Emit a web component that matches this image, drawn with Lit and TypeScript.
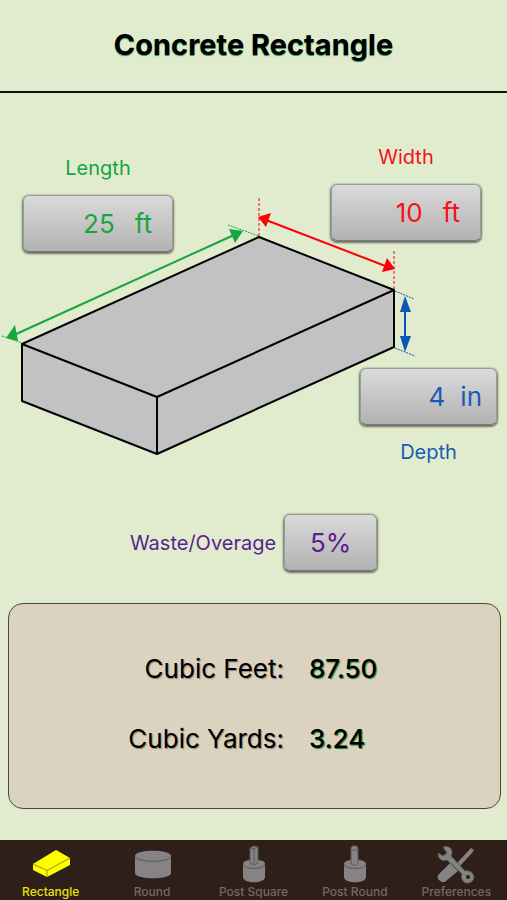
import { LitElement, html, css, svg, nothing } from "lit";
import { customElement, property, state } from "lit/decorators.js";
import { classMap } from "lit/directives/class-map.js";

const tabIcons = {
  rectangle: svg`
    <path class="fill" d="M2 20 25 6 39 14V21L16 33 2 26Z"/>
    <path class="seam" d="M2 20 16 26.500 39 14M16 26.500V33"/>`,
  round: svg`
    <path class="fill" d="M3 12C3 5 39 5 39 12V29C39 36 3 36 3 29Z"/>
    <path class="seam" d="M3 12C3 19 39 19 39 12"/>`,
  postSquare: svg`
    <path class="fill" d="M9 20C9 14 31 14 31 20V33C31 40 9 40 9 33Z"/>
    <path class="seam" d="M9 20C9 26 31 26 31 20"/>
    <path class="fill edge" d="M16 4 20 2 24 3V19L20 21 16 19Z"/>
    <path class="seam" d="M16 4 20 5 24 3M20 5V21"/>`,
  postRound: svg`
    <path class="fill" d="M9 20C9 14 31 14 31 20V33C31 40 9 40 9 33Z"/>
    <path class="seam" d="M9 20C9 26 31 26 31 20"/>
    <path class="fill edge" d="M16 4C16 1 23 1 23 4V19C23 22 16 22 16 19Z"/>
    <path class="seam" d="M16 4C16 7 23 7 23 4"/>`,
  preferences: svg`
    <path class="fill" d="M35 4 38 6 36 9 24 22 21 19Z"/>
    <path class="fill" d="M14 19 22 27 10 37Q7 40 3 36 0 33 3 30Z"/>
    <path class="fill edge" d="M7 3C14 1 18 6 15 12L29 27C34 26 38 29 38 34 37 39 30 41 27 37 25 34 25 32 26 30L11 16C6 18 2 15 2 9L7 12 11 9Z"/>
    <circle class="hole" cx="32" cy="33" r="2"/>`,
};

type TabId = keyof typeof tabIcons;

const tabs: { id: TabId; label: string }[] = [
  { id: "rectangle", label: "Rectangle" },
  { id: "round", label: "Round" },
  { id: "postSquare", label: "Post Square" },
  { id: "postRound", label: "Post Round" },
  { id: "preferences", label: "Preferences" },
];

@customElement("measure-field")
export class MeasureField extends LitElement {
  @property() label = "";
  @property() value = "";
  @property() unit = "";

  static styles = css`
    :host {
      display: flex;
      flex-direction: column;
      align-items: center;
      gap: 15px;
    }
    :host([layout="below"]) {
      flex-direction: column-reverse;
    }
    :host([layout="inline"]) {
      flex-direction: row;
      gap: 8px;
    }
    label {
      font-size: 20px;
      line-height: 24px;
    }
    button {
      box-sizing: border-box;
      display: flex;
      align-items: center;
      justify-content: flex-end;
      gap: 20px;
      width: var(--field-width, 150px);
      height: 57px;
      padding: 0 20px;
      border: 1px solid #9a9a98;
      border-bottom-color: #777;
      border-radius: 6px;
      background: linear-gradient(#dadadb, #b2b2b3);
      box-shadow: 0 1px 2px 1px #6c7264;
      color: inherit;
      font: 26px/32px Inter, sans-serif;
      cursor: pointer;
    }
    :host([layout="below"]) button {
      gap: 15px;
      padding: 0 14px;
    }
    :host([layout="inline"]) button {
      justify-content: center;
      padding: 0;
    }
  `;

  render() {
    return html`
      <label for="value">${this.label}</label>
      <button id="value" type="button">
        <span>${this.value}</span>${this.unit ? html`<span>${this.unit}</span>` : nothing}
      </button>
    `;
  }
}

@customElement("app-root")
export class AppRoot extends LitElement {
  @state() private active: TabId = "rectangle";

  static styles = css`
    :host {
      display: flex;
      flex-direction: column;
      min-height: 100vh;
      background: #e1ecce;
      color: #000;
      font-family: Inter, sans-serif;
    }
    header {
      padding: 27px 16px 28px;
      border-bottom: 2px solid #0c140c;
      text-align: center;
    }
    h1 {
      margin: 0;
      font-size: 29px;
      line-height: 36px;
      font-weight: 700;
      text-shadow: 0 1px 1px #2c8a50;
    }
    main {
      flex: 1;
      display: flex;
      flex-direction: column;
    }
    .stage {
      display: grid;
    }
    .slab,
    .fields {
      grid-area: 1 / 1;
    }
    .slab {
      display: block;
      width: 100%;
    }
    .face {
      fill: #c2c2c2;
      stroke: #000;
      stroke-width: 2;
      stroke-linejoin: round;
    }
    .line {
      stroke-width: 2;
    }
    .guide {
      stroke-width: 1;
      stroke-dasharray: 2 1;
    }
    .guide.tall {
      stroke-dasharray: 3 2;
    }
    .green {
      stroke: #16a53f;
      fill: #16a53f;
    }
    .red {
      stroke: #fb0007;
      fill: #fb0007;
    }
    .blue {
      stroke: #0a57b5;
      fill: #0a57b5;
    }
    .head {
      stroke: none;
    }
    .fields {
      display: flex;
      justify-content: space-between;
      align-items: flex-start;
    }
    .right {
      display: flex;
      flex-direction: column;
      align-items: flex-end;
      gap: 127px;
      padding-top: 52px;
    }
    .length {
      color: #16a53f;
      padding: 63px 0 0 23px;
    }
    .width {
      color: #f5101a;
      padding-right: 26px;
    }
    .depth {
      --field-width: 137px;
      color: #1a5cb4;
      padding-right: 10px;
    }
    .waste {
      --field-width: 93px;
      color: #5b1f91;
      justify-content: center;
      padding-top: 34px;
    }
    .results {
      display: grid;
      grid-template-columns: 275px 1fr;
      column-gap: 25px;
      row-gap: 38px;
      margin: 32px 6px 30px 8px;
      padding: 49px 0 53px;
      border: 1px solid #4c4444;
      border-radius: 15px;
      background: #dbd3c0;
      font-size: 26px;
      line-height: 32px;
    }
    dt {
      text-align: right;
      text-shadow: 1px 1px 1px #8a867c;
    }
    dd {
      margin: 0;
      font-weight: 500;
      text-shadow: 1px 1px 1px #16803c;
    }
    nav {
      display: flex;
      background: #2e1f18;
      height: 60px;
    }
    .tab {
      flex: 1 1 0;
      min-width: 0;
      display: flex;
      flex-direction: column;
      align-items: center;
      justify-content: flex-end;
      padding: 0;
      border: 0;
      background: none;
      color: #76695f;
      font: 500 12px/16px Inter, sans-serif;
      white-space: nowrap;
      cursor: pointer;
    }
    .tab svg {
      width: 40px;
      height: 40px;
      flex: none;
    }
    .fill {
      fill: #858383;
    }
    .seam {
      fill: none;
      stroke: #5b5754;
      stroke-width: 1;
    }
    .edge {
      stroke: #5b5754;
      stroke-width: 1;
    }
    .hole {
      fill: #2e1f18;
    }
    .on {
      color: #e6e212;
    }
    .on .fill {
      fill: #ffff00;
    }
    .on .seam {
      stroke: #98920a;
    }
  `;

  private slab() {
    return html`
      <svg class="slab" viewBox="0 93 507 387" aria-hidden="true">
        <path class="face" d="M22 344 259 237 394 290V347L157 454 22 401Z" />
        <path class="face" d="M22 344 157 397 394 290 M157 397V454" fill-opacity="0" />
        <path class="guide green" d="M2 336 22 343M228 225 259 236" />
        <path class="line green" d="M14 335 234 235" />
        <path class="head green" d="M6 338 15 325 18 341ZM243 231 229 229 235 243Z" />
        <path class="guide tall red" d="M259 198V236M394 251V289" />
        <path class="line red" d="M266 220 388 267" />
        <path class="head red" d="M258 217 271 213 266 227ZM395 269 387 258 382 272Z" />
        <path class="guide blue" d="M395 291 414 299M395 348 415 356" />
        <path class="line blue" d="M405 308V340" />
        <path class="head blue" d="M405 296 400 312H411ZM405 352 400 336H411Z" />
      </svg>
    `;
  }

  render() {
    return html`
      <header><h1>Concrete Rectangle</h1></header>
      <main>
        <div class="stage">
          ${this.slab()}
          <div class="fields">
            <measure-field class="length" label="Length" value="25" unit="ft"></measure-field>
            <div class="right">
              <measure-field class="width" label="Width" value="10" unit="ft"></measure-field>
              <measure-field class="depth" layout="below" label="Depth" value="4" unit="in"></measure-field>
            </div>
          </div>
        </div>
        <measure-field class="waste" layout="inline" label="Waste/Overage" value="5%"></measure-field>
        <dl class="results">
          <dt>Cubic Feet:</dt>
          <dd>87.50</dd>
          <dt>Cubic Yards:</dt>
          <dd>3.24</dd>
        </dl>
      </main>
      <nav>
        ${tabs.map(
          (tab) => html`
            <button
              type="button"
              class=${classMap({ tab: true, on: tab.id === this.active })}
              aria-current=${tab.id === this.active ? "page" : nothing}
              @click=${() => (this.active = tab.id)}
            >
              <svg viewBox="0 0 40 40" aria-hidden="true">${tabIcons[tab.id]}</svg>
              <span>${tab.label}</span>
            </button>
          `,
        )}
      </nav>
    `;
  }
}
